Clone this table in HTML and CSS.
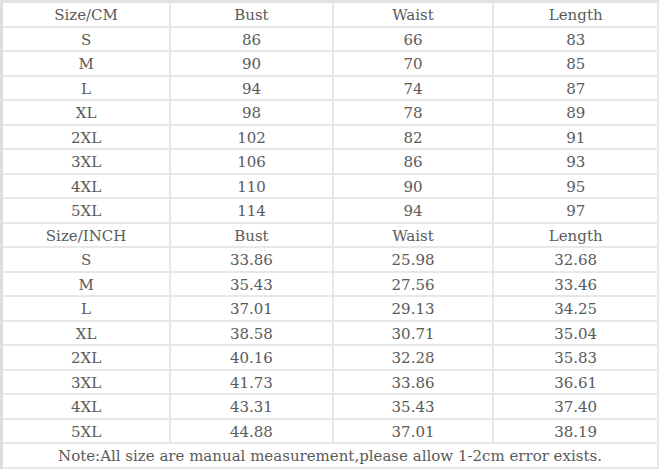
FILE: index.html
```html
<!DOCTYPE html>
<html>
<head>
<meta charset="utf-8">
<link rel="stylesheet" href="styles.css">
</head>
<body>
<table class="size-table">
  <colgroup>
    <col class="c1"><col class="c2"><col class="c3"><col class="c4">
  </colgroup>
  <tbody>
    <tr><td>Size/CM</td><td>Bust</td><td>Waist</td><td>Length</td></tr>
    <tr><td>S</td><td>86</td><td>66</td><td>83</td></tr>
    <tr><td>M</td><td>90</td><td>70</td><td>85</td></tr>
    <tr><td>L</td><td>94</td><td>74</td><td>87</td></tr>
    <tr><td>XL</td><td>98</td><td>78</td><td>89</td></tr>
    <tr><td>2XL</td><td>102</td><td>82</td><td>91</td></tr>
    <tr><td>3XL</td><td>106</td><td>86</td><td>93</td></tr>
    <tr><td>4XL</td><td>110</td><td>90</td><td>95</td></tr>
    <tr><td>5XL</td><td>114</td><td>94</td><td>97</td></tr>
    <tr><td>Size/INCH</td><td>Bust</td><td>Waist</td><td>Length</td></tr>
    <tr><td>S</td><td>33.86</td><td>25.98</td><td>32.68</td></tr>
    <tr><td>M</td><td>35.43</td><td>27.56</td><td>33.46</td></tr>
    <tr><td>L</td><td>37.01</td><td>29.13</td><td>34.25</td></tr>
    <tr><td>XL</td><td>38.58</td><td>30.71</td><td>35.04</td></tr>
    <tr><td>2XL</td><td>40.16</td><td>32.28</td><td>35.83</td></tr>
    <tr><td>3XL</td><td>41.73</td><td>33.86</td><td>36.61</td></tr>
    <tr><td>4XL</td><td>43.31</td><td>35.43</td><td>37.40</td></tr>
    <tr><td>5XL</td><td>44.88</td><td>37.01</td><td>38.19</td></tr>
    <tr><td colspan="4">Note:All size are manual measurement,please allow 1-2cm error exists.</td></tr>
  </tbody>
</table>
</body>
</html>
```
FILE: styles.css
```css
html, body {
  margin: 0;
  padding: 0;
  background: #ffffff;
}
.size-table {
  border-collapse: collapse;
  table-layout: fixed;
  width: 659px;
  border-top: 3px solid #e2e2e2;
  border-left: 3px solid #dedede;
  border-right: 2px solid #e4e4e4;
  border-bottom: 2px solid #e4e4e4;
  font-family: "DejaVu Serif", "Liberation Serif", serif;
  font-size: 15px;
  color: #5a5a5a;
}
.c1 { width: 168px; }
.c2 { width: 162px; }
.c3 { width: 160px; }
.c4 { width: 164px; }
.size-table td {
  border: 2px solid #e8e8e8;
  height: 20.5px;
  padding: 2px 0 0;
  text-align: center;
  vertical-align: middle;
  line-height: 20px;
}
```
